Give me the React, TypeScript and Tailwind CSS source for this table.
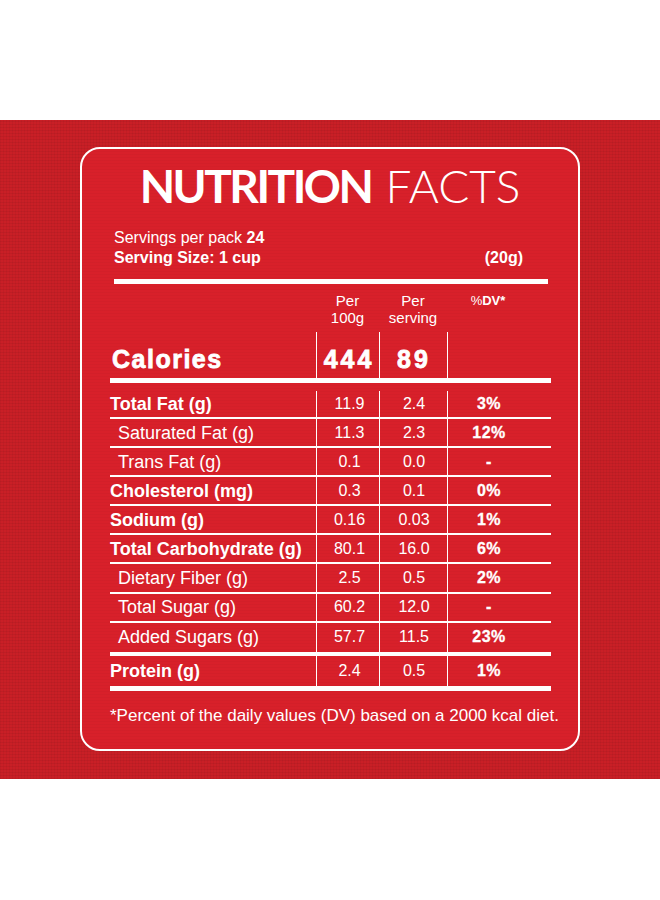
import React from "react";

type Row = {
  label: string;
  bold?: boolean;
  per100: string;
  perServing: string;
  dv: string;
  rowClass: string;
};

// heights include the bottom border (border-box)
const ROWS: Row[] = [
  { label: "Total Fat (g)", bold: true, per100: "11.9", perServing: "2.4", dv: "3%", rowClass: "h-[36px] border-b-2 pt-[8px]" },
  { label: "Saturated Fat (g)", per100: "11.3", perServing: "2.3", dv: "12%", rowClass: "h-[29.1px] border-b-2" },
  { label: "Trans Fat (g)", per100: "0.1", perServing: "0.0", dv: "-", rowClass: "h-[29.1px] border-b-2" },
  { label: "Cholesterol (mg)", bold: true, per100: "0.3", perServing: "0.1", dv: "0%", rowClass: "h-[29.1px] border-b-2" },
  { label: "Sodium (g)", bold: true, per100: "0.16", perServing: "0.03", dv: "1%", rowClass: "h-[29.1px] border-b-2" },
  { label: "Total Carbohydrate (g)", bold: true, per100: "80.1", perServing: "16.0", dv: "6%", rowClass: "h-[29.1px] border-b-2" },
  { label: "Dietary Fiber (g)", per100: "2.5", perServing: "0.5", dv: "2%", rowClass: "h-[29.1px] border-b-2" },
  { label: "Total Sugar (g)", per100: "60.2", perServing: "12.0", dv: "-", rowClass: "h-[29.1px] border-b-2" },
  { label: "Added Sugars (g)", per100: "57.7", perServing: "11.5", dv: "23%", rowClass: "h-[33px] border-b-4" },
  { label: "Protein (g)", bold: true, per100: "2.4", perServing: "0.5", dv: "1%", rowClass: "h-[35px] border-b-[5px]" },
];

const GRID = "grid grid-cols-[206px_63px_68px_104px]";

const NutrientRow = ({ row }: { row: Row }) => {
  return (
    <div className={`${GRID} border-white ${row.rowClass}`}>
      <div
        className={`flex items-center text-[18px] leading-[20px] ${
          row.bold ? "font-bold" : "pl-[8px]"
        }`}
      >
        {row.label}
      </div>
      <div className="flex items-center justify-center border-l-[1.5px] border-white pl-[3px] text-[16px] leading-[20px]">
        {row.per100}
      </div>
      <div className="flex items-center justify-center border-l-[1.5px] border-white pl-[1px] text-[16px] leading-[20px]">
        {row.perServing}
      </div>
      <div className="flex items-center border-l-[1.5px] border-white">
        <div className="w-[82px] text-center text-[16px] font-bold leading-[20px] tracking-[0.5px] [-webkit-text-stroke:0.3px_white]">
          {row.dv}
        </div>
      </div>
    </div>
  );
};

export default function App() {
  return (
    <div className="min-h-[900px] w-[660px] bg-white font-['Liberation_Sans',Arial,sans-serif] text-white">
      <div className="h-[120px]" />
      <div className="h-[659px] bg-[#c91f26] bg-[repeating-linear-gradient(0deg,rgba(0,0,0,0.05)_0px,rgba(0,0,0,0.05)_1px,transparent_1px,transparent_3px),repeating-linear-gradient(90deg,rgba(0,0,0,0.04)_0px,rgba(0,0,0,0.04)_1px,transparent_1px,transparent_3px)] pl-[80px] pt-[27px]">
        <div className="h-[604px] w-[500px] rounded-[20px] border-2 border-white bg-[#d8202a] bg-[repeating-linear-gradient(0deg,rgba(0,0,0,0.025)_0px,rgba(0,0,0,0.025)_1px,transparent_1px,transparent_3px)]">
          {/* title */}
          <div className="flex justify-center pt-[14px] font-['Lato',sans-serif] text-[46px] leading-[46px]">
            <span className="font-bold tracking-[-2.5px]">NUTRITION</span>
            <span className="ml-[14px] font-light">FACTS</span>
          </div>

          {/* serving info */}
          <div className="ml-[32px] mt-[19px] w-[434px] text-[16px] leading-[20px]">
            <p>
              Servings per pack <span className="font-bold">24</span>
            </p>
            <div className="flex justify-between font-bold">
              <span>Serving Size: 1 cup</span>
              <span className="pr-[25px]">(20g)</span>
            </div>
            <div className="mt-[11px] h-[5px] w-full bg-white" />
          </div>

          {/* table */}
          <div className="ml-[28px] w-[441px]">
            <div className={`${GRID} h-[48px] pt-[8px]`}>
              <div />
              <div className="text-center text-[15px] leading-[17px]">
                Per
                <br />
                100g
              </div>
              <div className="text-center text-[15px] leading-[17px]">
                Per
                <br />
                serving
              </div>
              <div className="w-[82px] text-center text-[13px] leading-[17px]">
                %<span className="font-bold">DV*</span>
              </div>
            </div>

            <div className={`${GRID} h-[51px] border-b-[5px] border-white`}>
              <div className="pl-[2px] pt-[15px] text-[25px] font-bold leading-[24px] tracking-[1.5px] [-webkit-text-stroke:0.8px_white]">
                Calories
              </div>
              <div className="border-l-[1.5px] border-white pl-[2px] pt-[15px] text-center text-[25px] font-bold leading-[24px] tracking-[3px] [-webkit-text-stroke:0.8px_white]">
                444
              </div>
              <div className="border-l-[1.5px] border-white pl-[1px] pt-[15px] text-center text-[25px] font-bold leading-[24px] tracking-[3px] [-webkit-text-stroke:0.8px_white]">
                89
              </div>
              <div className="border-l-[1.5px] border-white" />
            </div>

            {ROWS.map((row, index) => (
              <NutrientRow key={index} row={row} />
            ))}
          </div>

          {/* footnote */}
          <p className="ml-[28px] mt-[15px] text-[17px] leading-[20px]">
            *Percent of the daily values (DV) based on a 2000 kcal diet.
          </p>
        </div>
      </div>
    </div>
  );
}
